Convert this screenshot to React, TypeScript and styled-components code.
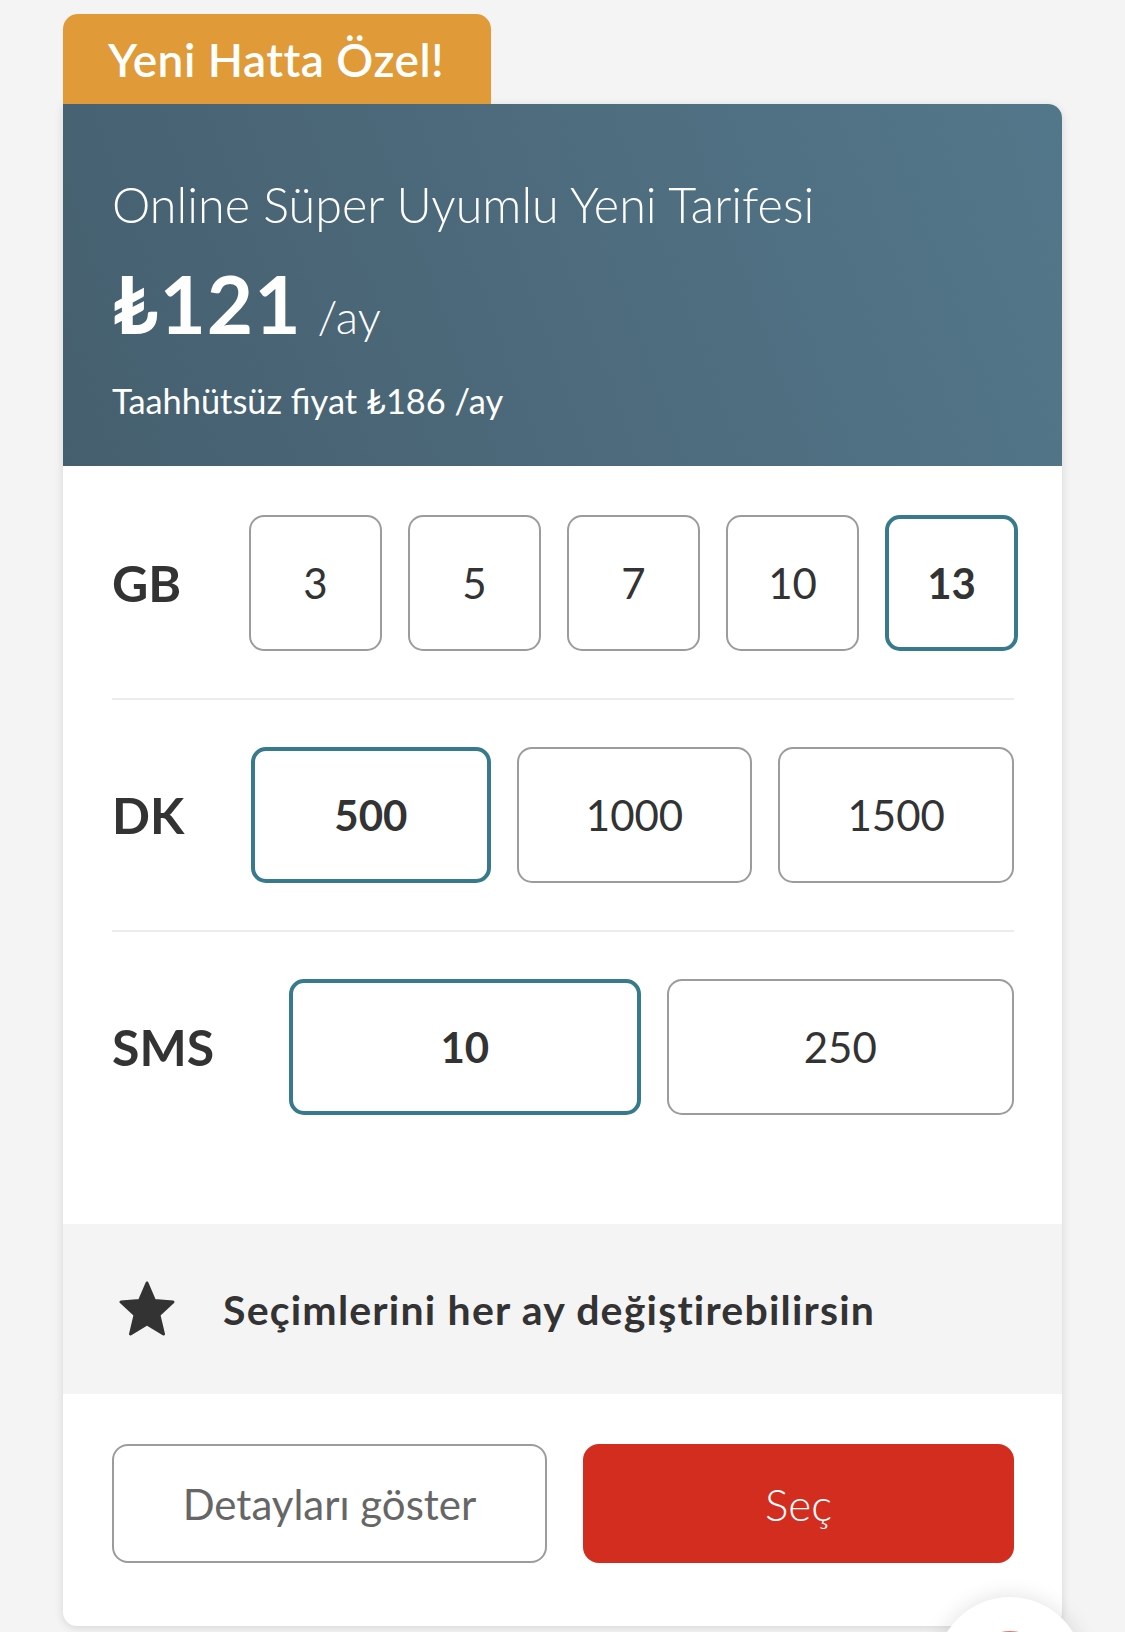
import React from "react";
import styled, { createGlobalStyle } from "styled-components";

const Global = createGlobalStyle`
  html, body { margin: 0; padding: 0; background: #f4f4f4; overflow: hidden; }
  body { font-family: "Lato", "Noto Sans", sans-serif; color: #333; }
  * { box-sizing: border-box; }
`;

const Page = styled.div`
  position: relative;
  width: 1125px;
  height: 1632px;
  padding: 14px 63px 0 63px;
  background: #f4f4f4;
  overflow: hidden;
`;

const Badge = styled.div`
  display: inline-flex;
  align-items: center;
  height: 90px;
  width: 428px;
  padding-left: 45px;
  background: #e09a37;
  border-radius: 15px 15px 0 0;
  color: #fff;
  font-family: "Lato", sans-serif;
  font-weight: 600;
  font-size: 46px;
  letter-spacing: 0.5px;
`;

const Card = styled.div`
  background: #fff;
  border-radius: 0 14px 14px 14px;
  box-shadow: 0 2px 10px rgba(0, 0, 0, 0.12);
  overflow: hidden;
`;

const Header = styled.div`
  background: linear-gradient(70deg, #455f6e 0%, #4d6b7d 50%, #53778a 100%);
  color: #fff;
  padding: 76px 48px 48px 49px;
`;

const Title = styled.div`
  font-weight: 300;
  font-size: 48.5px;
  line-height: 48px;
`;

const PriceRow = styled.div`
  margin-top: 35px;
  display: flex;
  align-items: baseline;
  line-height: 80px;
`;

const Price = styled.span`
  font-weight: 700;
  font-size: 80px;
  letter-spacing: 1px;
`;

const Per = styled.span`
  font-weight: 300;
  font-size: 46px;
  margin-left: 16px;
`;

const Sub = styled.div`
  margin-top: 27px;
  font-weight: 400;
  font-size: 34.4px;
  line-height: 34px;
`;

const Body = styled.div`
  padding: 49px 48px 109px 49px;
`;

const Row = styled.div`
  display: flex;
  align-items: center;
  gap: 69px;
`;

const Label = styled.div<{ $width: number }>`
  width: ${(p) => p.$width}px;
  font-weight: 700;
  font-size: 50px;
  color: #333;
  flex: none;
  white-space: nowrap;
`;

const Options = styled.div`
  display: flex;
  gap: 26px;
  flex: 1;
`;

const Option = styled.div<{ $selected?: boolean; $fixed?: boolean }>`
  flex: ${(p) => (p.$fixed ? "none" : "1")};
  width: ${(p) => (p.$fixed ? "133px" : "auto")};
  height: 136px;
  display: flex;
  align-items: center;
  justify-content: center;
  border-radius: 15px;
  border: ${(p) => (p.$selected ? "4px solid #377a8e" : "2px solid #9c9c9c")};
  font-size: 42px;
  font-weight: ${(p) => (p.$selected ? 700 : 400)};
  color: #333;
  background: #fff;
`;

const Divider = styled.div`
  height: 2px;
  background: #ececec;
  margin: 47px 0 47px 0;
`;

const InfoBand = styled.div`
  height: 170px;
  background: #f4f4f4;
  display: flex;
  align-items: center;
  padding-left: 54px;
  gap: 46px;
`;

const InfoText = styled.div`
  font-weight: 700;
  font-size: 41px;
  color: #333;
  letter-spacing: 1.2px;
`;

const StarIcon = styled.svg`
  width: 60px;
  height: 58px;
  flex: none;
  filter: blur(0.6px);
`;

const Footer = styled.div`
  display: flex;
  gap: 36px;
  padding: 50px 48px 63px 49px;
`;

const Button = styled.button<{ $primary?: boolean }>`
  flex: 1;
  height: 119px;
  border-radius: 16px;
  font-family: "Lato", sans-serif;
  font-size: ${(p) => (p.$primary ? 44 : 42)}px;
  font-weight: ${(p) => (p.$primary ? 300 : 400)};
  color: ${(p) => (p.$primary ? "#fff" : "#666")};
  background: ${(p) => (p.$primary ? "#d32d20" : "#fff")};
  border: ${(p) => (p.$primary ? "none" : "2px solid #9c9c9c")};
  cursor: pointer;
`;

const Fab = styled.div`
  position: absolute;
  left: 936px;
  top: 1597px;
  width: 148px;
  height: 148px;
  border-radius: 50%;
  background: #fff;
  box-shadow: 0 0 22px rgba(0, 0, 0, 0.12);
`;

const FabDot = styled.div`
  position: absolute;
  left: 34px;
  top: 34px;
  width: 80px;
  height: 80px;
  border-radius: 50%;
  background: linear-gradient(180deg, #e8716a, #d32d20);
`;

const gb = ["3", "5", "7", "10", "13"];
const dk = ["500", "1000", "1500"];
const sms = ["10", "250"];

export default function App() {
  return (
    <Page>
      <Global />
      <Badge>Yeni Hatta Özel!</Badge>
      <Card>
        <Header>
          <Title>Online Süper Uyumlu Yeni Tarifesi</Title>
          <PriceRow>
            <Price>₺121</Price>
            <Per>/ay</Per>
          </PriceRow>
          <Sub>Taahhütsüz fiyat ₺186 /ay</Sub>
        </Header>
        <Body>
          <Row>
            <Label $width={68}>GB</Label>
            <Options>
              {gb.map((v) => (
                <Option key={v} $fixed $selected={v === "13"}>
                  {v}
                </Option>
              ))}
            </Options>
          </Row>
          <Divider />
          <Row>
            <Label $width={70}>DK</Label>
            <Options>
              {dk.map((v) => (
                <Option key={v} $selected={v === "500"}>
                  {v}
                </Option>
              ))}
            </Options>
          </Row>
          <Divider />
          <Row>
            <Label $width={108}>SMS</Label>
            <Options>
              {sms.map((v) => (
                <Option key={v} $selected={v === "10"}>
                  {v}
                </Option>
              ))}
            </Options>
          </Row>
        </Body>
        <InfoBand>
          <StarIcon viewBox="0 0 60 58">
            <polygon
              points="30,3 37.5,20.5 56,22 42,35 46.5,54 30,44 13.5,54 18,35 4,22 22.5,20.5"
              fill="#333"
              stroke="#333"
              strokeWidth="3"
              strokeLinejoin="round"
            />
          </StarIcon>
          <InfoText>Seçimlerini her ay değiştirebilirsin</InfoText>
        </InfoBand>
        <Footer>
          <Button>Detayları göster</Button>
          <Button $primary>Seç</Button>
        </Footer>
      </Card>
      <Fab>
        <FabDot />
      </Fab>
    </Page>
  );
}
